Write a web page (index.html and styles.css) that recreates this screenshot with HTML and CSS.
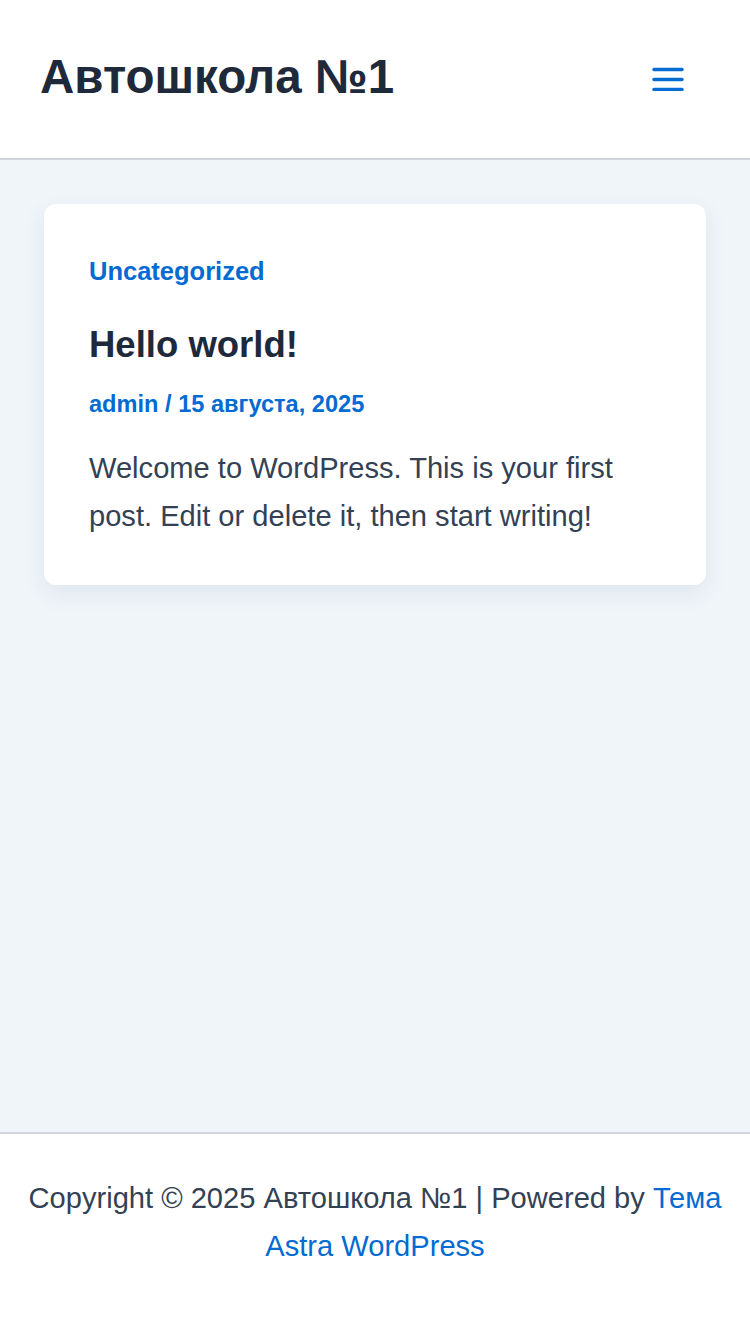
FILE: index.html
```html
<!DOCTYPE html>
<html lang="ru">
<head>
<meta charset="utf-8">
<title>Автошкола №1</title>
<link rel="stylesheet" href="styles.css">
</head>
<body>
<div class="page">
  <header class="site-header">
    <a class="site-title" href="#">Автошкола №1</a>
    <button class="menu-toggle" aria-label="Меню">
      <svg width="32" height="24" viewBox="0 0 32 24"><g stroke="#046bd2" stroke-width="3.4" stroke-linecap="round"><line x1="2" y1="2.5" x2="30" y2="2.5"/><line x1="2" y1="12.5" x2="30" y2="12.5"/><line x1="2" y1="22.5" x2="30" y2="22.5"/></g></svg>
    </button>
  </header>
  <main class="content">
    <article class="post-card">
      <a class="cat" href="#">Uncategorized</a>
      <h2 class="post-title">Hello world!</h2>
      <div class="meta"><a href="#">admin</a> / <a href="#">15 августа, 2025</a></div>
      <p class="excerpt">Welcome to WordPress. This is your first post. Edit or delete it, then start writing!</p>
    </article>
  </main>
  <footer class="site-footer">
    <p>Copyright © 2025 Автошкола №1 | Powered by <a href="#">Тема Astra WordPress</a></p>
  </footer>
</div>
</body>
</html>
```
FILE: styles.css
```css
* { box-sizing: border-box; }
html, body { margin: 0; padding: 0; }
body {
  font-family: "Liberation Sans", Arial, sans-serif;
  color: #334155;
  background: #ffffff;
}
a { text-decoration: none; color: #046bd2; }
.page {
  min-height: 1334px;
  display: flex;
  flex-direction: column;
}
.site-header {
  height: 160px;
  background: #fff;
  border-bottom: 2px solid #d1d5db;
  display: flex;
  align-items: center;
  justify-content: space-between;
  padding: 0 66px 0 40px;
}
.site-title {
  font-size: 47.5px;
  font-weight: 700;
  color: #1e293b;
  margin-top: -6px;
}
.menu-toggle {
  background: none;
  border: 0;
  padding: 0;
  display: flex;
}
.content {
  background: #f0f5fa;
  height: 972px;
  padding: 44px 44px 0;
}
.post-card {
  background: #fff;
  border-radius: 12px;
  box-shadow: 0 8px 24px rgba(15, 40, 80, 0.08);
  padding: 52px 45px 45px;
}
.cat {
  display: block;
  font-size: 25.5px;
  font-weight: 700;
  line-height: 30px;
}
.post-title {
  margin: 35px 0 0;
  font-size: 36.5px;
  line-height: 48px;
  color: #1e293b;
  font-weight: 700;
}
.meta {
  margin-top: 20px;
  font-size: 23.6px;
  font-weight: 700;
  line-height: 30px;
  color: #046bd2;
}
.excerpt {
  margin: 25px 0 0;
  font-size: 29.1px;
  line-height: 48px;
  color: #334155;
}
.site-footer {
  border-top: 2px solid #d1d5db;
  background: #fff;
  flex: 1;
  padding: 40px 20px 0;
  text-align: center;
}
.site-footer p {
  margin: 0;
  font-size: 29.1px;
  line-height: 48px;
}
```
